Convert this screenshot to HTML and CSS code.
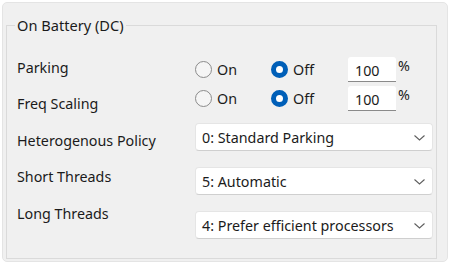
FILE: index.html
```html
<!DOCTYPE html>
<html lang="en">
<head>
    <meta charset="UTF-8">
    <title>On Battery (DC)</title>
    <link rel="stylesheet" href="styles.css">
</head>
<body>
    <div class="panel">
        <fieldset class="group">
            <legend>On Battery (DC)</legend>

            <div class="form">
                <!-- Rótulos -->
                <div class="labels">
                    <div class="label">Parking</div>
                    <div class="label">Freq Scaling</div>
                    <div class="label">Heterogenous Policy</div>
                    <div class="label">Short Threads</div>
                    <div class="label">Long Threads</div>
                </div>

                <!-- Controles -->
                <div class="controls">
                    <div class="radio-row">
                        <label class="radio"><input type="radio" name="parking"><span>On</span></label>
                        <label class="radio"><input type="radio" name="parking" checked><span>Off</span></label>
                        <input type="text" class="num" value="100">
                        <span class="pct">%</span>
                    </div>
                    <div class="radio-row">
                        <label class="radio"><input type="radio" name="freq"><span>On</span></label>
                        <label class="radio"><input type="radio" name="freq" checked><span>Off</span></label>
                        <input type="text" class="num" value="100">
                        <span class="pct">%</span>
                    </div>

                    <div class="select">
                        <span>0: Standard Parking</span>
                        <svg class="chevron" width="11" height="6" viewBox="0 0 11 6"><path d="M0.5 0.5 L5.5 5 L10.5 0.5" fill="none" stroke="#606060" stroke-width="1.1"/></svg>
                    </div>
                    <div class="select">
                        <span>5: Automatic</span>
                        <svg class="chevron" width="11" height="6" viewBox="0 0 11 6"><path d="M0.5 0.5 L5.5 5 L10.5 0.5" fill="none" stroke="#606060" stroke-width="1.1"/></svg>
                    </div>
                    <div class="select">
                        <span>4: Prefer efficient processors</span>
                        <svg class="chevron" width="11" height="6" viewBox="0 0 11 6"><path d="M0.5 0.5 L5.5 5 L10.5 0.5" fill="none" stroke="#606060" stroke-width="1.1"/></svg>
                    </div>
                </div>
            </div>
        </fieldset>
    </div>
</body>
</html>
```

FILE: styles.css
```css
body {
    margin: 0;
    background: #ffffff;
    font-family: 'Noto Sans', sans-serif;
    font-size: 14.3px;
    color: #1b1b1b;
}

.panel {
    margin: 2px;
    width: 444px;
    height: 258px;
    background-color: #f0f0f0;
    border: 1px solid #e4e4e4;
    border-radius: 5px;
    overflow: hidden;
}

/* Caixa de grupo */
.group {
    margin: 13px 0 0 3px;
    width: 431px;
    height: 243px;
    box-sizing: border-box;
    padding: 0 0 0 8px;
    border: 1px solid #dadada;
    border-radius: 0;
}

.group legend {
    padding: 0 2px;
    line-height: 18px;
    font-size: 14.6px;
}

.form {
    display: flex;
}

.labels {
    width: 180px;
    padding-top: 15px;
    display: flex;
    flex-direction: column;
}

.label {
    height: 36.5px;
    display: flex;
    align-items: center;
    padding-left: 2px;
}

.controls {
    padding-top: 22px;
    display: flex;
    flex-direction: column;
    width: 238px;
}

.radio-row {
    height: 27px;
    display: flex;
    align-items: center;
    margin-bottom: 2px;
}

.radio {
    display: flex;
    align-items: center;
    gap: 5px;
    width: 76px;
}

.radio input {
    appearance: none;
    margin: 0;
    width: 17px;
    height: 17px;
    box-sizing: border-box;
    border: 1px solid #8b8b8b;
    border-radius: 50%;
    background: #f5f5f5;
}

.radio input:checked {
    border: 5px solid #005fb8;
    background: #ffffff;
}

.num {
    margin-left: 1px;
    width: 48px;
    height: 25px;
    box-sizing: border-box;
    border: none;
    border-bottom: 1px solid #8a8a8a;
    border-radius: 3px 3px 0 0;
    padding: 2px 0 0 7px;
    font-family: inherit;
    font-size: 14.3px;
    color: #1b1b1b;
    background: #ffffff;
}

.pct {
    align-self: flex-start;
    margin: 1px 0 0 2px;
    line-height: 18px;
}

.select {
    margin-top: 9px;
    height: 28px;
    box-sizing: border-box;
    background: #ffffff;
    border: 1px solid #e5e5e5;
    border-bottom-color: #cfcfcf;
    border-radius: 4px;
    display: flex;
    align-items: center;
    justify-content: space-between;
    padding: 0 7px 0 6px;
}

.select + .select {
    margin-top: 16px;
}

.chevron {
    margin-top: 1px;
}
```
